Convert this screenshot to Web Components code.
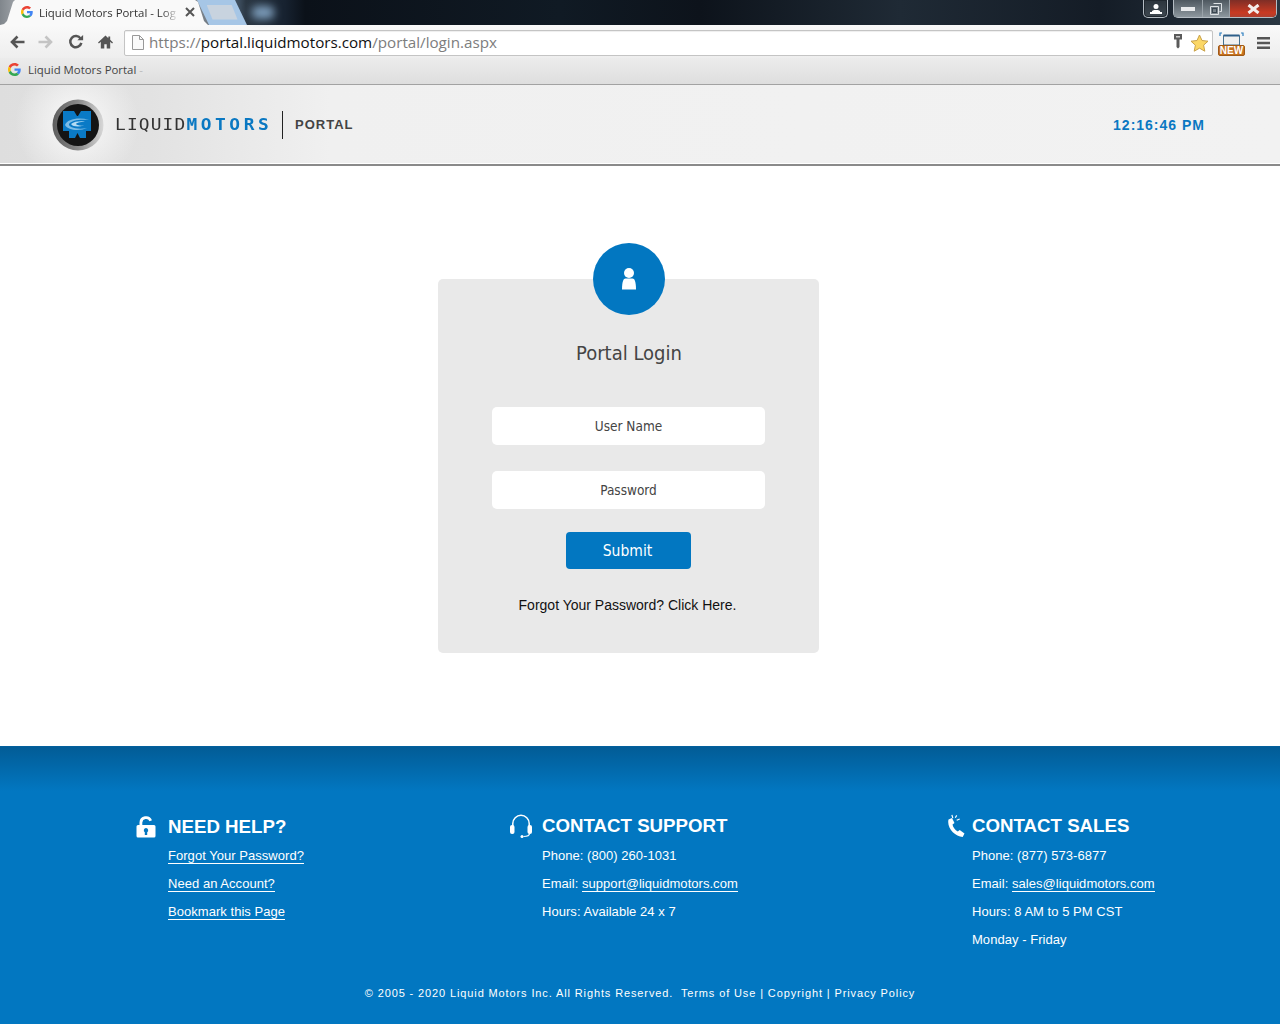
<!DOCTYPE html>
<html lang="en"><head><meta charset="utf-8"><title>Liquid Motors Portal - Login</title>
<style>
html,body{margin:0;padding:0;background:#fff}
body{font-family:"Liberation Sans",Arial,sans-serif}
</style></head><body>
<portal-app>
  <browser-chrome></browser-chrome>
  <site-header></site-header>
  <login-panel>
    <field-box>User Name</field-box>
    <field-box>Password</field-box>
  </login-panel>
  <site-footer>
    <footer-col icon="lock" style="--icon-w:33px;--w:374px;--dy:1px">
      <span slot="title">NEED HELP?</span>
      <div><a href="#">Forgot Your Password?</a></div>
      <div><a href="#">Need an Account?</a></div>
      <div><a href="#">Bookmark this Page</a></div>
    </footer-col>
    <footer-col icon="headset" style="--icon-w:33px;--w:437px">
      <span slot="title">CONTACT SUPPORT</span>
      <div>Phone: (800) 260-1031</div>
      <div>Email: <a href="#">support@liquidmotors.com</a></div>
      <div>Hours: Available 24 x 7</div>
    </footer-col>
    <footer-col icon="phone" style="--icon-w:26px;--w:300px">
      <span slot="title">CONTACT SALES</span>
      <div>Phone: (877) 573-6877</div>
      <div>Email: <a href="#">sales@liquidmotors.com</a></div>
      <div>Hours: 8 AM to 5 PM CST</div>
      <div>Monday - Friday</div>
    </footer-col>
  </site-footer>
</portal-app>
<script>
const G=(s)=>`<svg width="${s}" height="${s}" viewBox="0 0 48 48" style="display:block;flex:none"><path fill="#EA4335" d="M24 9.5c3.5 0 6.700 1.200 9.200 3.600l6.900-6.900C35.900 2.400 30.500 0 24 0 14.600 0 6.500 5.400 2.600 13.200l8 6.200C12.400 13.700 17.700 9.500 24 9.500z"/><path fill="#4285F4" d="M47 24.500c0-1.600-.1-3.100-.4-4.500H24v9h12.900c-.6 3-2.200 5.500-4.800 7.200l7.700 6c4.500-4.200 7.200-10.300 7.200-17.700z"/><path fill="#FBBC05" d="M10.600 28.600c-.5-1.500-.8-3-.8-4.600s.3-3.100.8-4.600l-8-6.200C.9 16.500 0 20.100 0 24s.9 7.500 2.600 10.800l8-6.200z"/><path fill="#34A853" d="M24 48c6.500 0 11.900-2.100 15.800-5.800l-7.700-6c-2.100 1.400-4.900 2.300-8.100 2.300-6.300 0-11.600-4.200-13.400-9.900l-8 6.200C6.500 42.600 14.600 48 24 48z"/></svg>`;
const def=(name,html)=>customElements.define(name,class extends HTMLElement{
  constructor(){super();this.attachShadow({mode:'open'}).innerHTML=html;}
});
def('portal-app',`<style>:host{display:flex;flex-direction:column;width:1280px;height:1024px;overflow:hidden;background:#fff}</style><slot></slot>`);

def('browser-chrome',`<style>
:host{display:block;height:85px;font-family:"Open Sans","Liberation Sans",sans-serif;flex:none}
.strip{height:25px;display:flex;justify-content:space-between;background:linear-gradient(90deg,#80868c 0,#9a9fa4 14px,#8f9499 190px,#3a4a5a 240px,#2a3642 246px,#172230 285px,#0b1119 305px,#101a24 560px,#0d131b 700px,#1f2a35 900px,#141c26 1100px,#2a3742 1280px)}
.tabs{display:flex;align-items:flex-end;position:relative}
.tab{width:208px;height:25px;box-sizing:border-box;display:flex;align-items:center;padding:0 13px 1px 21px;gap:6px;background:#f9f9f9;clip-path:polygon(0 25px,4px 24px,7px 21px,13px 2px,15px 0,195px 0,198px 2px,204px 21px,208px 25px);font-size:11.400px;color:#333;white-space:nowrap;position:relative;z-index:1}
.tab b{font-weight:400;flex:1;-webkit-mask-image:linear-gradient(90deg,#000 88%,transparent);mask-image:linear-gradient(90deg,#000 88%,transparent)}
.new{width:50px;height:25px;margin-left:-11px;background:#a6c6e6;clip-path:polygon(0 0,38px 0,50px 25px,12px 25px);display:flex;align-items:center;justify-content:center;box-sizing:border-box}
.new i{display:block;width:31px;height:15px;margin:-1px 0 0 0;background:#c8d3df;clip-path:polygon(0 0,25px 0,31px 100%,6px 100%)}
.blur{position:absolute;left:252px;top:6px;width:22px;height:13px;background:#7c9cba;border-radius:5px;filter:blur(4px)}
.win{display:flex;align-items:flex-start;gap:5px;padding-right:3px;height:18px}
.btn{height:18px;box-sizing:border-box;border:1px solid #b4bcc3;border-top:none;border-radius:0 0 5px 5px;display:flex;box-shadow:inset 0 0 0 1px #20282f;background:linear-gradient(#2c353d,#3e4850)}
.btn>div{display:flex;align-items:center;justify-content:center;height:100%;box-sizing:border-box}
.min{width:29px;border-right:1px solid #9aa3aa;background:linear-gradient(#4e5860,#8d979e)}
.max{width:27px;background:linear-gradient(#4e5860,#8d979e);border-right:1px solid #9aa3aa}
.cls{width:46px;background:linear-gradient(#7e2e26,#c93a22 75%,#b04030);border-radius:0 0 4px 0}
.tool{height:33px;padding-top:2px;display:flex;align-items:center;box-sizing:border-box;background:linear-gradient(#f9f9f9,#eeeeee)}
.nav{display:flex;align-items:center;width:124px;flex:none;margin-top:-2px}
.addr{width:1089px;height:26px;box-sizing:border-box;background:#fff;border:1px solid #c4c4c4;border-radius:2px;display:flex;align-items:center;padding:0 3px 0 7px;font-size:15.200px;color:#7d7d7d;white-space:nowrap;box-shadow:inset 0 1px 1px #eee}
.addr i{font-style:normal;color:#111}
.addr .url{flex:1;margin:-2px 0 0 5px}
.ext{display:flex;align-items:center;flex:1;padding:0 10px 0 5px;justify-content:space-between}
.bm{height:27px;box-sizing:border-box;background:linear-gradient(#ececec,#dedede);border-bottom:1px solid #a2a2a2;display:flex;align-items:center;padding:0 0 3px 8px;gap:7px;font-size:11.400px;color:#444}
.bm em{font-style:normal;color:#bbb}
</style>
<div class="strip">
  <div class="tabs">
    <div class="tab">${G(12)}<b>Liquid Motors Portal - Log</b>
      <svg width="10" height="10" viewBox="0 0 10 10" style="flex:none"><path d="M1 1l8 8M9 1l-8 8" stroke="#555" stroke-width="2"/></svg></div>
    <div class="new"><i></i></div>
    <div class="blur"></div>
  </div>
  <div class="win">
    <div class="btn" style="width:25px;justify-content:center;align-items:center"><svg width="14" height="12" viewBox="0 0 14 12"><circle cx="7" cy="3.500" r="2.500" fill="#fff"/><path d="M3 8l2-1h4l2 1v1h2v2H1V9h2z" fill="#fff"/></svg></div>
    <div class="btn">
      <div class="min"><svg width="14" height="4"><rect width="14" height="4" fill="#e8eaec"/></svg></div>
      <div class="max"><svg width="12" height="12" viewBox="0 0 12 12"><path d="M3.500.5h8v8h-2M.5 3.500h8v8h-8z" fill="none" stroke="#dfe3e6"/><rect x="2.500" y="5.500" width="4" height="4" fill="none" stroke="#3a4650"/></svg></div>
      <div class="cls"><svg width="13" height="10" viewBox="0 0 13 10"><path d="M1.500 1l10 8M11.500 1l-10 8" stroke="#f4ecea" stroke-width="3"/></svg></div>
    </div>
  </div>
</div>
<div class="tool">
  <div class="nav">
    <svg width="16" height="14" viewBox="0 0 16 14" style="margin-left:9px"><path d="M15.500 7H3.500M8.500 1.500L3 7l5.500 5.500" fill="none" stroke="#555" stroke-width="2.600"/></svg>
    <svg width="16" height="14" viewBox="0 0 16 14" style="margin-left:13px"><path d="M.5 7h12M7.500 1.500L13 7l-5.500 5.500" fill="none" stroke="#c4c4c4" stroke-width="2.600"/></svg>
    <svg width="16" height="16" viewBox="0 0 18 18" style="margin-left:14px"><path d="M14.200 5.200A6.300 6.300 0 1 0 15 10" fill="none" stroke="#555" stroke-width="2.800"/><path d="M10.500 7h6.500V1z" fill="#555"/></svg>
    <svg width="15" height="16" viewBox="0 0 16 16" style="margin-left:14px"><path d="M8 1L0 8.500l1 1L3 7.800V15h3.700v-4.500h2.600V15H13V7.800l2 1.700 1-1L13 5.700V2h-2v1.900z" fill="#555"/></svg>
  </div>
  <div class="addr">
    <svg width="12" height="15" viewBox="0 0 12 15" style="flex:none"><path d="M.5.500h7l4 4v10H.5z" fill="#fafafa" stroke="#999"/><path d="M7.500.5v4h4" fill="none" stroke="#999"/></svg>
    <span class="url">https://<i>portal.liquidmotors.com</i>/portal/login.aspx</span>
    <svg width="10" height="15" viewBox="0 0 10 15" style="margin:-2px 7px 0 0;flex:none"><path d="M1 0h8v5.500H6.500V13L5 14.500 3.500 13V5.500H1z" fill="#5a5a5a"/><rect x="3" y="2" width="4" height="1.500" fill="#ccc"/></svg>
    <svg width="19" height="18" viewBox="0 0 19 18" style="flex:none"><path d="M9.500 1l2.500 5.500 6 .7-4.400 4 1.200 6-5.300-3-5.300 3 1.200-6L1 7.200l6-.7z" fill="#fbd766" stroke="#c9a24a"/></svg>
  </div>
  <div class="ext">
    <svg width="27" height="25" viewBox="0 0 27 25" style="margin-top:1px"><path d="M4 2H2v3M23 2h2v3" fill="none" stroke="#2d7fc0" stroke-width="1.200"/><path d="M5.500 4.500h16V14h-16z" fill="#f0f0f0" stroke="#47718f"/><path d="M5.500 4.500h16" stroke="#2d5f8a" stroke-width="2"/>
      <rect x=".5" y="14.500" width="26" height="10" rx="1.500" fill="#c5701e" stroke="#a05a15"/><text x="13.500" y="23" text-anchor="middle" font-family="Liberation Sans,sans-serif" font-weight="700" font-size="10" fill="#fff">NEW</text></svg>
    <svg width="13" height="12" viewBox="0 0 13 12"><path d="M0 0h13v2.500H0zM0 4.700h13v2.500H0zM0 9.400h13v2.500H0z" fill="#555"/></svg>
  </div>
</div>
<div class="bm">${G(13)}<span>Liquid Motors Portal <em>-</em></span></div>`);

def('site-header',`<style>
:host{display:flex;align-items:center;flex:none;height:81px;box-sizing:border-box;padding:1px 75px 1px 52px;justify-content:space-between;
background:radial-gradient(circle 62px at 77px 38px,#fbfbfb 0,rgba(251,251,251,0) 100%),linear-gradient(90deg,#dedede 0,#e2e2e2 150px,#f0f0f0 330px,#f2f2f2 100%);
border-bottom:2px solid #8a8a8a;box-shadow:inset 0 -1px 0 #fff;font-family:"Liberation Sans",Arial,sans-serif}
.l{display:flex;align-items:center}
.word{font:400 15.500px/1 "DejaVu Sans Mono","Liberation Mono",monospace;margin-left:11px;color:#333;white-space:nowrap;width:156px;flex:none;padding-top:2px}
.word span{display:inline-block;transform:scaleX(1.15);transform-origin:0 50%;letter-spacing:1.020px}
.word b{font-weight:700;color:#0a78c2;letter-spacing:3.100px}
.sep{width:1px;height:28px;background:#222;margin:0 12px 0 11px}
.p{font-size:13px;font-weight:700;letter-spacing:1px;color:#444}
.t{font-size:14px;font-weight:700;letter-spacing:1px;color:#0a78c2}
</style>
<div class="l">
<svg width="52" height="52" viewBox="0 0 52 52"><defs><linearGradient id="r" x1="0" y1="0" x2="1" y2="0"><stop offset="0" stop-color="#5d5d5d"/><stop offset=".5" stop-color="#8a8a8a"/><stop offset="1" stop-color="#d8d8d8"/></linearGradient></defs>
<circle cx="26" cy="26" r="25.500" fill="url(#r)"/><circle cx="26" cy="26" r="21" fill="#141414"/>
<path d="M11 12H22L25 17H26L29 12H39V32H34V39H28L25.500 34L23 39H17V32H11Z" fill="#0a7ac6"/>
<path d="M13 26c2-6 14-8 24-5-8-1-18 0-20 4-1 3 8 6 18 4-6 3-19 3-22-3z" fill="#7cbce6"/><path d="M19 25c3-2.500 9-3 14-2.500-5 .5-9 1.500-9 2.500s4 2 8 1.500c-5 1.500-11 1.500-13-1.500z" fill="#b4dbf3"/></svg>
<div class="word"><span>LIQUID<b>MOTORS</b></span></div><div class="sep"></div><div class="p">PORTAL</div></div>
<div class="t">12:16:46 PM</div>`);

def('field-box',`<style>
:host{display:block;width:273px;height:38px;box-sizing:border-box;background:#fff;border-radius:5px;text-align:center;font:13.500px/38px "DejaVu Sans Condensed","Open Sans",sans-serif;color:#444;margin-bottom:26px}
</style><slot></slot>`);

def('login-panel',`<style>
:host{display:block;flex:1;padding:113px 0 0 438px;box-sizing:border-box}
.card{width:381px;height:374px;box-sizing:border-box;background:#e9e9e9;border-radius:5px;position:relative;display:flex;flex-direction:column;align-items:center}
.badge{position:absolute;left:155px;top:-36px;width:72px;height:72px;border-radius:50%;background:#0277c1;display:flex;align-items:center;justify-content:center}
h1{margin:60px 0 40px;font:400 20px/28px "DejaVu Sans Condensed","Open Sans",sans-serif;color:#444;position:relative;left:.5px}
button{all:unset;box-sizing:border-box;width:125px;height:37px;padding-right:2px;background:#0277c1;border-radius:4px;color:#fff;text-align:center;font:15.500px/38px "DejaVu Sans Condensed","Open Sans",sans-serif;margin:-3px 0 0 0}
p{margin:27px 0 0 -2px;font:14px/18px "Liberation Sans",Arial,sans-serif;color:#111}
</style>
<div class="card"><div class="badge"><svg width="14" height="22" viewBox="0 0 14 22"><circle cx="7" cy="5" r="5" fill="#fff"/><path d="M3.500 10.500h7c2 0 3.500 3 3.500 11H0c0-8 1.500-11 3.500-11z" fill="#fff"/></svg></div>
<h1>Portal Login</h1><slot></slot><button type="button">Submit</button>
<p>Forgot Your Password? Click Here.</p></div>`);

const ICONS={
lock:`<svg width="20" height="22" viewBox="0 0 20 22" style="margin-left:1px"><path d="M3.500 9V6.500a6.500 6.500 0 0 1 12.500-2.300l-2.500 1A3.800 3.800 0 0 0 6.300 6.500V9z" fill="#fff"/><path d="M2 9h16a1.500 1.500 0 0 1 1.500 1.500V20a1.500 1.500 0 0 1-1.500 1.500H2A1.500 1.500 0 0 1 .5 20v-9.500A1.500 1.500 0 0 1 2 9zm8 3a2.300 2.300 0 0 0-1.200 4.200V19h2.400v-2.800A2.300 2.300 0 0 0 10 12z" fill="#fff" fill-rule="evenodd"/></svg>`,
headset:`<svg width="22" height="24" viewBox="0 0 22 24" style="margin-left:1px"><path d="M2.800 12V9.500a8.200 8.200 0 0 1 16.400 0V12" fill="none" stroke="#fff" stroke-width="1.500"/><rect x="0" y="11" width="4.500" height="9" rx="2" fill="#fff"/><rect x="17.500" y="11" width="4.500" height="9" rx="2" fill="#fff"/><path d="M19.500 19.500c0 2-2 3-6 3" fill="none" stroke="#fff" stroke-width="1.200"/><circle cx="12" cy="22.500" r="1.500" fill="#fff"/></svg>`,
phone:`<svg width="20" height="24" viewBox="0 0 20 24" style="margin-left:1px"><path d="M1.500 5.500L5 4l2.500 5-2 1.500c.7 3 2.500 5.500 5.300 7l1.900-1.500 4.800 3.500-1.800 3.500C8 22.500 -.5 14 1.500 5.500z" fill="#fff"/><path d="M5.800 4.200L4.900.8M8.300 3.800L9.700 1.400M9.700 6.300l3-1.300" stroke="#fff" stroke-width="1.200" fill="none"/></svg>`};
customElements.define('footer-col',class extends HTMLElement{
  constructor(){super();this.attachShadow({mode:'open'});}
  connectedCallback(){this.shadowRoot.innerHTML=`<style>
:host{display:grid;grid-template-columns:var(--icon-w) 1fr;width:var(--w);flex:none;align-content:start;color:#fff;font:13px/28px "Liberation Sans",Arial,sans-serif}
.i{height:28px;display:flex;align-items:center;margin-top:var(--dy,0px)}
h2{margin:var(--dy,0px) 0 0;font:700 18.700px/28px "Liberation Sans",Arial,sans-serif;color:#fff}
.b{grid-column:2;padding-top:calc(2px - var(--dy,0px));letter-spacing:.04px}
</style><div class="i">${ICONS[this.getAttribute('icon')]}</div><h2><slot name="title"></slot></h2><div class="b"><slot></slot></div>`;
    this.querySelectorAll('a').forEach(a=>{a.style.cssText='color:#fff;text-decoration:none;border-bottom:1px solid #fff'});
  }});

def('site-footer',`<style>
:host{display:block;flex:none;height:278px;box-sizing:border-box;background:linear-gradient(#025c96 0,#0277c1 44px);border-top:1px solid #03609c;color:#fff;font-family:"Liberation Sans",Arial,sans-serif}
.cols{display:flex;padding:65px 0 0 135px;height:239px;box-sizing:border-box}
.c{text-align:center;font-size:11px;line-height:14px;letter-spacing:.88px}
</style><div class="cols"><slot></slot></div><div class="c">© 2005 - 2020 Liquid Motors Inc. All Rights Reserved.&nbsp; Terms of Use | Copyright | Privacy Policy</div>`);
</script></body></html>
